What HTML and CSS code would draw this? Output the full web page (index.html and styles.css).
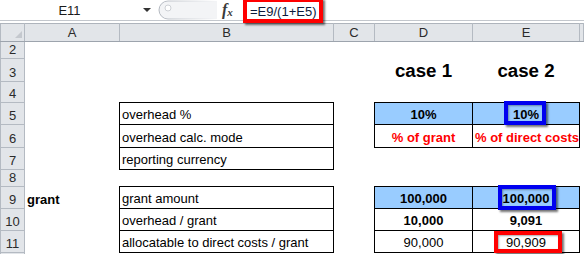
FILE: index.html
```html
<!DOCTYPE html>
<html lang="en">
<head>
  <meta charset="UTF-8" />
  <title>overhead cases</title>
  <link rel="stylesheet" href="styles.css">
</head>
<body>

  <!-- formula bar -->
  <div class="formula-bar">
    <div class="name-box">E11</div>
    <span class="drop"></span>
    <svg class="splitter" width="60" height="20" viewBox="0 0 60 20">
      <defs>
        <linearGradient id="fade" x1="0" x2="1" y1="0" y2="0">
          <stop offset="0" stop-color="#b3b8c0" />
          <stop offset="1" stop-color="#b3b8c0" stop-opacity="0" />
        </linearGradient>
      </defs>
      <path d="M60 1 H11 A9 9 0 0 0 11 19 H60" fill="#f3f4f6" stroke="url(#fade)" />
      <circle cx="11" cy="8" r="3" fill="#fff" stroke="#cdd0d5" />
    </svg>
    <span class="fx"><i>f</i><sub>x</sub></span>
    <div class="formula">=E9/(1+E5)</div>
  </div>

  <table class="sheet">
    <colgroup>
      <col class="c-head"><col class="c-a"><col class="c-b"><col class="c-c"><col class="c-d"><col class="c-e"><col>
    </colgroup>
    <tr class="r-head">
      <th class="corner"><span class="select-all"></span></th>
      <th>A</th><th>B</th><th>C</th><th>D</th><th>E</th><th></th>
    </tr>
    <tr class="r2"><th class="rn">2</th><td></td><td></td><td></td><td></td><td></td><td></td></tr>
    <tr class="r3">
      <th class="rn">3</th><td></td><td></td><td></td>
      <td class="case">case 1</td><td class="case">case 2</td><td></td>
    </tr>
    <tr class="r4"><th class="rn">4</th><td></td><td></td><td></td><td></td><td></td><td></td></tr>
    <tr class="r5">
      <th class="rn">5</th><td></td><td class="bx">overhead %</td><td></td>
      <td class="bx fill num bold">10%</td>
      <td class="bx fill num bold mark">10%<span class="hl hl-blue hl-e5"></span></td><td></td>
    </tr>
    <tr class="r6">
      <th class="rn">6</th><td></td><td class="bx">overhead calc. mode</td><td></td>
      <td class="bx num bold red">% of grant</td>
      <td class="bx num bold red">% of direct costs</td><td></td>
    </tr>
    <tr class="r7">
      <th class="rn">7</th><td></td><td class="bx">reporting currency</td><td></td><td></td><td></td><td></td>
    </tr>
    <tr class="r8"><th class="rn">8</th><td></td><td></td><td></td><td></td><td></td><td></td></tr>
    <tr class="r9">
      <th class="rn">9</th><td class="bold">grant</td><td class="bx">grant amount</td><td></td>
      <td class="bx fill num bold">100,000</td>
      <td class="bx fill num bold mark">100,000<span class="hl hl-blue hl-e9"></span></td><td></td>
    </tr>
    <tr class="r10">
      <th class="rn">10</th><td></td><td class="bx">overhead / grant</td><td></td>
      <td class="bx num bold">10,000</td>
      <td class="bx num bold">9,091</td><td></td>
    </tr>
    <tr class="r11">
      <th class="rn">11</th><td></td><td class="bx">allocatable to direct costs / grant</td><td></td>
      <td class="bx num">90,000</td>
      <td class="bx num mark">90,909<span class="hl hl-red hl-e11"></span></td><td></td>
    </tr>
    <tr class="r12"><th class="rn"></th><td></td><td></td><td></td><td></td><td></td><td></td></tr>
  </table>

</body>
</html>
```

FILE: styles.css
```css
body {
  margin: 0;
  background: #fff;
  font-family: "Liberation Sans", Arial, sans-serif;
  color: #000;
  overflow: hidden;
}

/* formula bar */
.formula-bar {
  position: relative;
  height: 20px;
  border-bottom: 1px solid #c3c7cd;
  margin-bottom: 2px;
  display: flex;
  align-items: center;
}

.name-box {
  width: 139px;
  text-align: center;
  font-size: 13px;
  color: #1a1a1a;
}

.drop {
  width: 0;
  height: 0;
  border-left: 4px solid transparent;
  border-right: 4px solid transparent;
  border-top: 4px solid #333;
  margin-left: 4px;
}

.splitter {
  margin-left: 6px;
}

.fx {
  margin-left: 5px;
  font-family: "Liberation Serif", serif;
  font-weight: bold;
  font-size: 16px;
  color: #3a3a3a;
  line-height: 1;
}

.fx sub {
  font-size: 11px;
  font-style: italic;
  vertical-align: -1px;
}

.formula {
  position: absolute;
  left: 243px;
  top: -2px;
  width: 80px;
  height: 25px;
  box-sizing: border-box;
  border: 4px solid #f00;
  box-shadow: 2px 2px 2px rgba(0, 0, 0, 0.55);
  background: #fff;
  font-size: 13px;
  line-height: 19px;
  padding-left: 3px;
  color: #0c1a3a;
}

/* sheet */
.sheet {
  border-collapse: collapse;
  table-layout: fixed;
  width: 584px;
}

.c-head { width: 24px; }
.c-a { width: 95px; }
.c-b { width: 214px; }
.c-c { width: 41px; }
.c-d { width: 98px; }
.c-e { width: 107px; }

.sheet th {
  background: #e2e5e9;
  font-weight: normal;
  font-size: 13px;
  color: #2b2b2b;
  padding: 0;
  border: 1px solid #b4bac2;
  text-align: center;
}

.r-head th {
  border-top: 1px solid #aeb4bc;
  border-bottom: 1px solid #9da4ad;
}

.corner {
  position: relative;
}

.select-all {
  position: absolute;
  right: 2px;
  bottom: 3px;
  width: 0;
  height: 0;
  border-left: 7px solid transparent;
  border-bottom: 7px solid #c4c8ce;
}

.sheet th.rn {
  vertical-align: bottom;
  line-height: 15px;
  padding-bottom: 1px;
}

.r-head { height: 18px; }
.r2 { height: 17px; }
.r3 { height: 23px; }
.r4 { height: 21px; }
.r5 { height: 22px; }
.r6 { height: 23px; }
.r7 { height: 22px; }
.r8 { height: 16px; }
.r9 { height: 22px; }
.r10 { height: 22px; }
.r11 { height: 22px; }
.r12 { height: 22px; }

.sheet td {
  padding: 0 2px 2px;
  font-size: 13px;
  line-height: 15px;
  vertical-align: bottom;
  white-space: nowrap;
  overflow: visible;
}

td.bx {
  border: 1px solid #000;
}

td.fill {
  background: #99ccff;
}

td.num {
  text-align: center;
}

.bold {
  font-weight: bold;
}

.red {
  color: #f00;
  font-size: 12.6px;
}

td.case {
  font-size: 18.7px;
  font-weight: bold;
  text-align: center;
  line-height: 21px;
  padding-bottom: 1px;
}

/* highlight marks drawn over cells */
td.mark {
  position: relative;
}

.hl {
  position: absolute;
  box-sizing: border-box;
  border: 4px solid;
  box-shadow: 2px 2px 2px rgba(0, 0, 0, 0.55), inset 1px 1px 2px rgba(0, 0, 0, 0.35);
}

.hl-blue { border-color: #0000f0; }
.hl-red { border-color: #f00; }

.hl-e5 { left: 31px; top: -2px; width: 42px; height: 24px; }
.hl-e9 { left: 25px; top: -2px; width: 58px; height: 25px; }
.hl-e11 { left: 21px; top: 0; width: 68px; height: 22px; }
```
